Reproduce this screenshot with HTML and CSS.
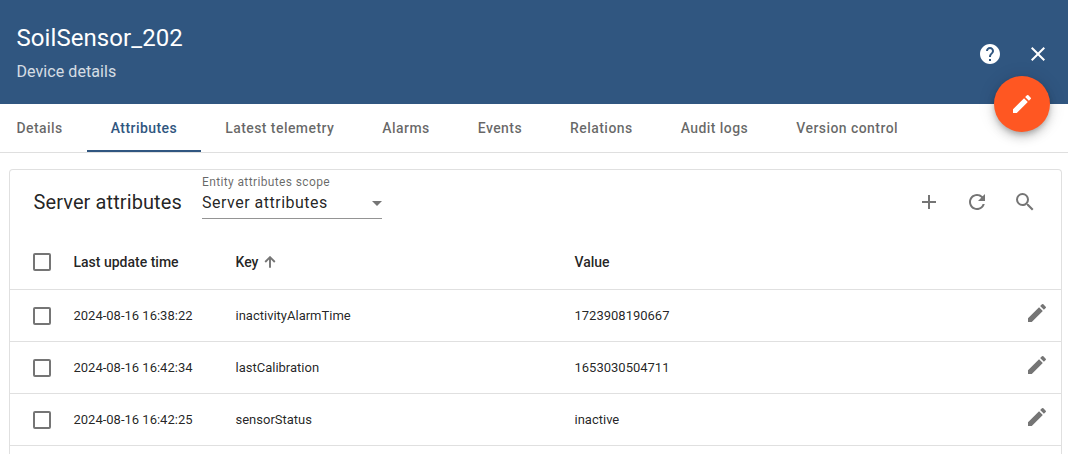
FILE: index.html
```html
<!DOCTYPE html>
<html lang="en">
<head>
<meta charset="utf-8">
<title>SoilSensor_202</title>
<link rel="stylesheet" href="styles.css">
</head>
<body>
<svg class="sprite" aria-hidden="true">
  <symbol id="edit" viewBox="0 0 24 24"><path d="M3 17.25V21h3.75L17.81 9.94l-3.75-3.75L3 17.25zM20.71 7.04a.996.996 0 0 0 0-1.41l-2.34-2.34a.996.996 0 0 0-1.41 0l-1.83 1.83 3.75 3.75 1.83-1.83z"/></symbol>
</svg>
<header class="header">
  <div class="heading">
    <h1 class="title">SoilSensor_202</h1>
    <div class="subtitle">Device details</div>
  </div>
  <div class="header-actions">
    <svg class="icon" viewBox="0 0 24 24"><path d="M12 2C6.48 2 2 6.48 2 12s4.48 10 10 10 10-4.480 10-10S17.520 2 12 2zm1 17h-2v-2h2v2zm2.070-7.750l-.9.920C13.450 12.900 13 13.500 13 15h-2v-.5c0-1.100.45-2.100 1.170-2.830l1.240-1.260c.37-.36.59-.86.59-1.410 0-1.100-.9-2-2-2s-2 .9-2 2H8c0-2.210 1.790-4 4-4s4 1.790 4 4c0 .88-.36 1.680-.93 2.250z"/></svg>
    <svg class="icon" viewBox="0 0 24 24"><path d="M19 6.410L17.590 5 12 10.590 6.410 5 5 6.410 10.590 12 5 17.590 6.410 19 12 13.410 17.590 19 19 17.590 13.410 12z"/></svg>
  </div>
  <button class="fab" aria-label="Edit"><svg class="icon"><use href="#edit"/></svg></button>
</header>
<nav class="tabs">
  <a class="tab">Details</a>
  <a class="tab active">Attributes</a>
  <a class="tab">Latest telemetry</a>
  <a class="tab">Alarms</a>
  <a class="tab">Events</a>
  <a class="tab">Relations</a>
  <a class="tab">Audit logs</a>
  <a class="tab">Version control</a>
</nav>
<main class="card">
  <div class="toolbar">
    <h2 class="card-title">Server attributes</h2>
    <div class="select">
      <div class="select-label">Entity attributes scope</div>
      <div class="select-value"><span>Server attributes</span><svg class="caret" viewBox="0 0 10 5"><path d="M0 0h10L5 5z"/></svg></div>
    </div>
    <div class="actions">
      <svg class="icon" viewBox="0 0 24 24"><path d="M19 13h-6v6h-2v-6H5v-2h6V5h2v6h6v2z"/></svg>
      <svg class="icon" viewBox="0 0 24 24"><path d="M17.650 6.350A7.958 7.958 0 0 0 12 4c-4.420 0-7.990 3.580-7.990 8s3.570 8 7.990 8c3.730 0 6.840-2.550 7.730-6h-2.080A5.990 5.990 0 0 1 12 18c-3.310 0-6-2.690-6-6s2.690-6 6-6c1.660 0 3.140.69 4.220 1.780L13 11h7V4l-2.350 2.350z"/></svg>
      <svg class="icon" viewBox="0 0 24 24"><path d="M15.500 14h-.79l-.28-.27A6.471 6.471 0 0 0 16 9.500 6.500 6.500 0 1 0 9.500 16c1.610 0 3.090-.59 4.230-1.570l.27.28v.79l5 4.990L20.490 19l-4.990-5zm-6 0C7.010 14 5 11.990 5 9.500S7.010 5 9.500 5 14 7.010 14 9.500 11.990 14 9.500 14z"/></svg>
    </div>
  </div>
  <div class="row head">
    <span class="checkbox"></span>
    <span>Last update time</span>
    <span class="sort">Key <svg class="arrow" viewBox="0 0 12 12"><path d="M6 11.700V1.500M1.200 6L6 1.200 10.800 6"/></svg></span>
    <span>Value</span>
  </div>
  <div class="row">
    <span class="checkbox"></span><span>2024-08-16 16:38:22</span><span>inactivityAlarmTime</span><span>1723908190667</span>
    <svg class="icon edit"><use href="#edit"/></svg>
  </div>
  <div class="row">
    <span class="checkbox"></span><span>2024-08-16 16:42:34</span><span>lastCalibration</span><span>1653030504711</span>
    <svg class="icon edit"><use href="#edit"/></svg>
  </div>
  <div class="row">
    <span class="checkbox"></span><span>2024-08-16 16:42:25</span><span>sensorStatus</span><span>inactive</span>
    <svg class="icon edit"><use href="#edit"/></svg>
  </div>
</main>
</body>
</html>
```
FILE: styles.css
```css
* { box-sizing: border-box; }
body {
  margin: 0;
  height: 454px;
  overflow: hidden;
  background: #fff;
  color: rgba(0, 0, 0, .87);
  font-family: Roboto, sans-serif;
  display: flex;
  flex-direction: column;
}
.sprite { display: none; }
.icon { width: 24px; height: 24px; fill: currentColor; display: block; flex: none; }
.header {
  position: relative;
  flex: none;
  height: 104px;
  padding: 4px 18px 0 16.5px;
  background: #305680;
  color: #fff;
  display: flex;
  justify-content: space-between;
}
.title { margin: 18px 0 0; font-size: 24px; line-height: 32px; font-weight: 400; letter-spacing: .07px; }
.subtitle { margin-top: 8px; font-size: 16px; line-height: 20px; opacity: .8; letter-spacing: .07px; }
.header-actions { display: flex; align-items: center; gap: 24px; }
.fab {
  position: absolute;
  right: 18px;
  bottom: -28px;
  width: 56px;
  height: 56px;
  padding: 0;
  border: 0;
  border-radius: 50%;
  background: #ff5722;
  color: #fff;
  display: grid;
  place-items: center;
  box-shadow: 0 3px 5px -1px rgba(0,0,0,.2), 0 6px 10px 0 rgba(0,0,0,.14), 0 1px 18px 0 rgba(0,0,0,.12);
}
.tabs {
  flex: none;
  display: flex;
  height: 49px;
  padding-left: 0;
  margin-left: -7.5px;
  border-bottom: 1px solid #dfdfdf;
}
.tab {
  padding: 0 24px;
  line-height: 48px;
  font-size: 14px;
  font-weight: 500;
  letter-spacing: .438px;
  color: rgba(0, 0, 0, .6);
  white-space: nowrap;
}
.tab.active { color: #305680; box-shadow: inset 0 -2px #305680; }
.card {
  flex: 1;
  min-height: 0;
  margin: 16px 6px 0 9px;
  border: 1px solid #e0e0e0;
  border-bottom: 0;
  border-radius: 4px 4px 0 0;
}
.toolbar { display: flex; height: 64px; padding: 0 24px 0 23.5px; }
.card-title { margin: 0 20px 0 0; width: 148.5px; font-size: 20px; line-height: 64px; font-weight: 400; letter-spacing: .1px; white-space: nowrap; }
.select { width: 180px; height: 49px; border-bottom: 1px solid #949494; padding-top: 4px; }
.select-label { font-size: 12px; line-height: 16px; letter-spacing: .37px; color: rgba(0, 0, 0, .6); }
.select-value {
  display: flex;
  align-items: center;
  justify-content: space-between;
  margin-top: 1px;
  font-size: 16px;
  line-height: 24px;
  letter-spacing: .5px;
}
.caret { width: 10px; height: 5px; fill: #757575; }
.actions { display: flex; align-items: center; gap: 24px; margin-left: auto; color: #757575; }
.row {
  display: grid;
  grid-template-columns: 40.5px 162px 339px 1fr 24px;
  align-items: center;
  height: 52px;
  padding: 0 12px 0 23px;
  border-bottom: 1px solid #e0e0e0;
  font-size: 13px;
}
.row.head { height: 56px; font-size: 14px; font-weight: 500; }
.checkbox { width: 18px; height: 18px; border: 2px solid #757575; border-radius: 2px; }
.sort { display: flex; align-items: center; gap: 6px; }
.arrow { width: 12px; height: 12px; fill: none; stroke: #757575; stroke-width: 1.9; }
.edit { color: #757575; margin-bottom: 5px; }
```
